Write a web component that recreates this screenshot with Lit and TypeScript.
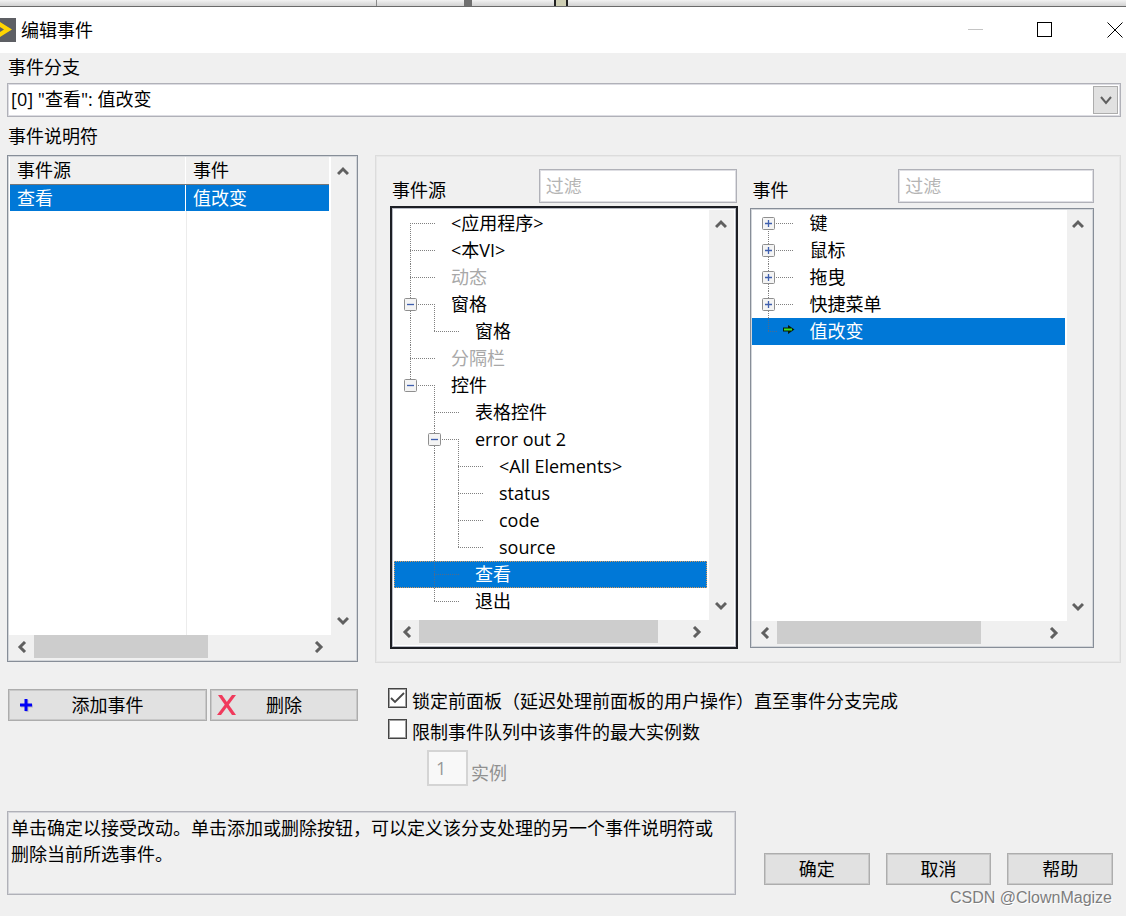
import { LitElement, html, svg, css, nothing } from "lit";
import { customElement, property } from "lit/decorators.js";

type Span = "full" | "top" | "bottom";

interface TreeRow {
  label: string;
  depth: number;
  lines: [number, Span][];
  toggle?: "open" | "closed";
  dim?: boolean;
  selected?: boolean;
  arrow?: boolean;
}

const SOURCES: TreeRow[] = [
  { label: "<应用程序>", depth: 0, lines: [[0, "bottom"]] },
  { label: "<本VI>", depth: 0, lines: [[0, "full"]] },
  { label: "动态", depth: 0, lines: [[0, "full"]], dim: true },
  { label: "窗格", depth: 0, lines: [[0, "full"], [1, "bottom"]], toggle: "open" },
  { label: "窗格", depth: 1, lines: [[0, "full"], [1, "top"]] },
  { label: "分隔栏", depth: 0, lines: [[0, "full"]], dim: true },
  { label: "控件", depth: 0, lines: [[0, "top"], [1, "bottom"]], toggle: "open" },
  { label: "表格控件", depth: 1, lines: [[1, "full"]] },
  { label: "error out 2", depth: 1, lines: [[1, "full"], [2, "bottom"]], toggle: "open" },
  { label: "<All Elements>", depth: 2, lines: [[1, "full"], [2, "full"]] },
  { label: "status", depth: 2, lines: [[1, "full"], [2, "full"]] },
  { label: "code", depth: 2, lines: [[1, "full"], [2, "full"]] },
  { label: "source", depth: 2, lines: [[1, "full"], [2, "top"]] },
  { label: "查看", depth: 1, lines: [[1, "full"]], selected: true },
  { label: "退出", depth: 1, lines: [[1, "top"]] },
];

const EVENTS: TreeRow[] = [
  { label: "键", depth: 0, lines: [[0, "bottom"]], toggle: "closed" },
  { label: "鼠标", depth: 0, lines: [[0, "full"]], toggle: "closed" },
  { label: "拖曳", depth: 0, lines: [[0, "full"]], toggle: "closed" },
  { label: "快捷菜单", depth: 0, lines: [[0, "full"]], toggle: "closed" },
  { label: "值改变", depth: 0, lines: [[0, "top"]], selected: true, arrow: true },
];

const STEP = 24;

const shared = css`
  * {
    box-sizing: border-box;
  }
  button {
    font: inherit;
    color: inherit;
    margin: 0;
    padding: 0;
    border: 0;
    background: none;
  }
  svg {
    display: block;
  }
`;

@customElement("scroll-frame")
export class ScrollFrame extends LitElement {
  @property({ type: Number }) size = 50;

  static styles = [
    shared,
    css`
      :host {
        display: grid;
        grid-template-columns: minmax(0, 1fr) 25px;
        grid-template-rows: minmax(0, 1fr) 25px;
        background: #fff;
        min-width: 0;
      }
      .view {
        min-width: 0;
        overflow: hidden;
      }
      .bar {
        display: flex;
        justify-content: space-between;
        background: #f0f0f0;
      }
      .vertical {
        flex-direction: column;
      }
      .bar button {
        flex: none;
        width: 25px;
        height: 23px;
        display: grid;
        place-items: center;
      }
      .vertical button {
        width: 23px;
        height: 28px;
      }
      .track {
        flex: 1;
      }
      .thumb {
        height: 23px;
        background: #cdcdcd;
      }
      .corner {
        background: #f0f0f0;
      }
      path {
        fill: none;
        stroke: #606060;
        stroke-width: 3;
      }
    `,
  ];

  private arrow(name: string, d: string) {
    return html`<button type="button" aria-label=${name}>
      <svg width="12" height="12" viewBox="0 0 12 12"><path d=${d} /></svg>
    </button>`;
  }

  render() {
    return html`
      <div class="view"><slot></slot></div>
      <div class="bar vertical">
        ${this.arrow("向上滚动", "M1 9 L6 4 L11 9")}
        ${this.arrow("向下滚动", "M1 3 L6 8 L11 3")}
      </div>
      <div class="bar">
        ${this.arrow("向左滚动", "M9 1 L4 6 L9 11")}
        <div class="track"><div class="thumb" style="width:${this.size}%"></div></div>
        ${this.arrow("向右滚动", "M3 1 L8 6 L3 11")}
      </div>
      <div class="corner"></div>
    `;
  }
}

@customElement("event-tree")
export class EventTree extends LitElement {
  @property({ attribute: false }) rows: TreeRow[] = [];
  @property() name = "";
  @property({ type: Boolean }) focused = false;

  static styles = [
    shared,
    css`
      :host {
        display: block;
      }
      ul {
        list-style: none;
        margin: 0;
        padding: 0;
      }
      .row {
        position: relative;
        display: flex;
        height: 27px;
        line-height: 27px;
        margin-right: 2px;
        white-space: nowrap;
      }
      .guides {
        flex: none;
        stroke: #808080;
        stroke-dasharray: 1 1;
      }
      .dim {
        color: #a8a8a8;
      }
      .selected {
        color: #fff;
        background: #0078d7;
      }
      .selected .guides {
        stroke: #4a6c90;
      }
      .focused .selected {
        outline: 1px dotted #d99a5b;
        outline-offset: -1px;
      }
      .toggle {
        position: absolute;
        top: 7px;
        width: 13px;
        height: 13px;
      }
    `,
  ];

  private guides(r: TreeRow) {
    const x = 16 + r.depth * STEP;
    const width = 57 + r.depth * STEP;
    return html`<svg class="guides" width=${width} height="27" aria-hidden="true">
      ${r.lines.map(([col, span]) => {
        const cx = 16.5 + col * STEP;
        return svg`<line x1=${cx} x2=${cx} y1=${span === "bottom" ? 13 : 0} y2=${span === "top" ? 14 : 27} />`;
      })}
      <line x1=${x} x2=${x + (r.arrow ? 10 : 25)} y1="13.5" y2="13.5" />
      ${r.arrow
        ? svg`<path d="M31 9.5 H36 V7 L42.5 11.5 L36 16 V13.5 H31 Z" fill="#0b1a0b" stroke="none" />
            <path d="M32 11.5 H40" stroke="#3fe01f" stroke-width="2" stroke-dasharray="none" />`
        : nothing}
    </svg>`;
  }

  private toggle(r: TreeRow) {
    return html`<button
      class="toggle"
      type="button"
      aria-label=${(r.toggle === "open" ? "折叠" : "展开") + r.label}
      style="left:${10 + r.depth * STEP}px"
    >
      <svg width="13" height="13" viewBox="0 0 13 13">
        <rect x="0.5" y="0.5" width="12" height="12" rx="1" fill="#f4f4f4" stroke="#8f8f8f" />
        <path d=${r.toggle === "open" ? "M3 6.5H10" : "M3 6.5H10M6.5 3V10"} stroke="#3f5fae" stroke-width="1.3" />
      </svg>
    </button>`;
  }

  render() {
    return html`<ul role="tree" aria-label=${this.name} class=${this.focused ? "focused" : ""}>
      ${this.rows.map(
        (r) => html`<li
          role="treeitem"
          aria-level=${r.depth + 1}
          aria-selected=${r.selected ? "true" : "false"}
          class="row ${r.dim ? "dim" : ""} ${r.selected ? "selected" : ""}"
        >
          ${this.guides(r)}${r.toggle ? this.toggle(r) : nothing}<span>${r.label}</span>
        </li>`
      )}
    </ul>`;
  }
}

@customElement("app-root")
export class AppRoot extends LitElement {
  static styles = [
    shared,
    css`
      :host {
        position: relative;
        display: flex;
        flex-direction: column;
        min-height: 100vh;
        overflow: hidden;
        background: #f0f0f0;
        color: #000;
        font: 18px/26px "Open Sans", "Noto Sans CJK SC", sans-serif;
      }
      .behind {
        display: flex;
        height: 7px;
        padding-left: 376px;
        background: linear-gradient(#f2f2f2, #d2d2d2);
        border-bottom: 1px solid #6a6a6a;
      }
      .edge {
        width: 1px;
        background: #8a8a8a;
      }
      .post {
        width: 8px;
        margin-left: 87px;
        background: #707070;
      }
      .block {
        width: 14px;
        margin-left: 82px;
        background: #cfcfb4;
        border: solid #222;
        border-width: 0 2px;
      }
      .titlebar {
        display: flex;
        align-items: center;
        height: 46px;
        padding-right: 3px;
        background: #fff;
      }
      h1 {
        flex: 1;
        margin: 0 0 0 5px;
        font: inherit;
      }
      .controls {
        display: flex;
        gap: 54px;
      }
      .content {
        padding: 1px 5px 0 7px;
      }
      .caption {
        display: block;
        padding-left: 1px;
        height: 29px;
      }
      .combo {
        display: grid;
        grid-template-columns: minmax(0, 1fr) 27px;
        align-items: center;
        height: 34px;
        border: 1px solid #b0b1b8;
        box-shadow: inset 0 0 0 1px #dcdce2;
        background: #fff;
        margin-bottom: 6px;
      }
      .combo select {
        grid-area: 1 / 1 / 2 / 3;
        height: 32px;
        padding: 0 30px 2px 3px;
        border: 0;
        background: none;
        appearance: none;
        font: inherit;
        color: inherit;
      }
      .drop {
        grid-area: 1 / 2;
        display: grid;
        place-items: center;
        width: 25px;
        height: 28px;
        border: 1px solid #adadad;
        background: #e1e1e1;
        pointer-events: none;
      }
      .main {
        display: grid;
        grid-template-columns: minmax(0, 351fr) minmax(0, 746fr);
        column-gap: 17px;
        margin-top: 3px;
      }
      .box {
        padding: 1px;
        border: 1px solid #878e98;
        box-shadow: inset 0 0 0 1px #d3d6da;
        background: #fff;
      }
      .specs {
        display: grid;
        margin-bottom: 1px;
      }
      .sheet {
        display: flex;
        flex-direction: column;
        height: 100%;
        padding: 0 2px 0 1px;
        background: linear-gradient(#ececec, #ececec) 55% 0 / 1px 100% no-repeat;
      }
      table {
        width: 100%;
        border-collapse: collapse;
        table-layout: fixed;
      }
      th,
      td {
        height: 27px;
        padding: 0 0 0 7px;
        font-weight: 400;
        line-height: 26px;
        text-align: left;
      }
      th {
        background: #f0f0f0;
        border-bottom: 1px solid #777;
      }
      th + th,
      td + td {
        border-left: 1px solid #fff;
      }
      th:first-child {
        width: 55%;
      }
      td {
        background: #0078d7;
        color: #fff;
      }
      .group {
        display: grid;
        grid-template-columns: minmax(0, 349fr) minmax(0, 344fr);
        column-gap: 12px;
        padding: 13px 26px 13px 14px;
        border: 1px solid #dcdcdc;
        box-shadow: inset 0 0 0 1px #e8e8e8;
      }
      .pane {
        display: flex;
        flex-direction: column;
      }
      .head {
        display: flex;
        align-items: center;
        justify-content: space-between;
        height: 34px;
      }
      .head label {
        padding: 8px 0 0 2px;
      }
      .filter {
        width: 57%;
        height: 34px;
        padding: 0 6px;
        border: 1px solid #b0b1b8;
        box-shadow: inset 0 0 0 1px #dedee3;
        border-radius: 0;
        background: #fff;
        font: inherit;
      }
      .filter::placeholder {
        color: #b4b4b4;
        opacity: 1;
      }
      .source .filter {
        margin-right: 1px;
      }
      .pane .box {
        display: grid;
        flex: 1;
      }
      .source .box {
        margin-top: 3px;
        padding: 2px;
        border: 2px solid #1c1e24;
        box-shadow: inset 0 0 0 1px #b8bbc4;
      }
      .event .box {
        margin: 5px 0 1px;
      }
      event-tree {
        min-height: 410px;
      }
      .options {
        display: grid;
        grid-template-columns: minmax(0, 349fr) minmax(0, 731fr);
        column-gap: 30px;
        margin-top: 22px;
        padding-left: 1px;
      }
      .edit {
        display: grid;
        grid-template-columns: 199fr 148fr;
        gap: 3px;
        align-items: start;
        padding-top: 4px;
      }
      .push {
        height: 32px;
        border: 1px solid #adadad;
        box-shadow: inset 0 0 0 1px #c8c8c8;
        background: #e1e1e1;
      }
      .tool {
        display: grid;
        grid-template-columns: 36px 1fr 36px;
        align-items: center;
      }
      .check {
        display: flex;
        align-items: center;
        gap: 5px;
        height: 31px;
        white-space: nowrap;
      }
      .check input {
        flex: none;
        width: 19px;
        height: 20px;
        margin: 0 0 6px;
        appearance: none;
        border: 1px solid #444;
        box-shadow: inset 0 0 0 1px #a0a0a0;
        background: #fff;
      }
      .check input:checked {
        background: #fff
          url("data:image/svg+xml,%3Csvg xmlns='http://www.w3.org/2000/svg' viewBox='0 0 17 18'%3E%3Cpath d='M2 9l4 4L15 4' fill='none' stroke='%23484848' stroke-width='1.8'/%3E%3C/svg%3E");
      }
      .count {
        display: flex;
        align-items: flex-end;
        gap: 3px;
        margin-top: 3px;
        padding-left: 39px;
        color: #909090;
      }
      .count input {
        width: 41px;
        height: 36px;
        padding: 0 7px;
        border: 2px solid #d4d4d4;
        background: #f8f8f8;
        color: #989898;
        font: inherit;
      }
      .footer {
        display: grid;
        grid-template-columns: minmax(0, 729fr) minmax(0, 349fr);
        column-gap: 28px;
        align-items: end;
        margin: 25px 8px 0 0;
      }
      .help {
        align-self: start;
        height: 84px;
        margin: 0;
        padding: 3px 16px 3px 3px;
        border: 1px solid #b0b1b8;
        box-shadow: inset 0 0 0 1px #d4d5da;
      }
      .actions {
        display: grid;
        grid-template-columns: repeat(3, 1fr);
        gap: 16px;
        padding-bottom: 10px;
      }
      .mark {
        position: absolute;
        right: 14px;
        bottom: 6px;
        color: #7d7d7d;
        font: 16px/24px "Liberation Sans", sans-serif;
        text-shadow: 1px 1px 0 #fff;
      }
    `,
  ];

  render() {
    return html`
      <div class="behind">
        <div class="edge"></div>
        <div class="post"></div>
        <div class="block"></div>
      </div>
      <header class="titlebar">
        <svg width="16" height="24" viewBox="0 0 16 24" aria-hidden="true">
          <rect width="16" height="24" fill="#5d5f64" />
          <path d="M0 4 L12 11.5 L0 19 V14 L4 11.5 L0 9 Z" fill="#ffd500" />
        </svg>
        <h1>编辑事件</h1>
        <div class="controls">
          <button type="button" aria-label="最小化">
            <svg width="16" height="16"><path d="M1 7.5H16" stroke="#c4c4c4" /></svg>
          </button>
          <button type="button" aria-label="最大化">
            <svg width="16" height="16"><rect x="0.5" y="0.5" width="14" height="14" fill="none" stroke="#000" /></svg>
          </button>
          <button type="button" aria-label="关闭">
            <svg width="16" height="16"><path d="M0.5 0.5L15.5 15.5M15.5 0.5L0.5 15.5" stroke="#000" /></svg>
          </button>
        </div>
      </header>
      <div class="content">
        <label class="caption" for="branch">事件分支</label>
        <div class="combo">
          <select id="branch">
            <option>[0] "查看": 值改变</option>
          </select>
          <span class="drop">
            <svg width="12" height="12" viewBox="0 0 12 12"><path d="M1 3L6 9L11 3" fill="none" stroke="#606060" stroke-width="2" /></svg>
          </span>
        </div>
        <span class="caption" id="specs">事件说明符</span>
        <main class="main">
          <section class="box specs" aria-labelledby="specs">
            <scroll-frame .size=${64}>
              <div class="sheet">
                <table>
                  <thead>
                    <tr>
                      <th>事件源</th>
                      <th>事件</th>
                    </tr>
                  </thead>
                  <tbody>
                    <tr>
                      <td>查看</td>
                      <td>值改变</td>
                    </tr>
                  </tbody>
                </table>
              </div>
            </scroll-frame>
          </section>
          <section class="group">
            <div class="pane source">
              <div class="head">
                <label for="source-filter">事件源</label>
                <input class="filter" id="source-filter" type="text" placeholder="过滤" />
              </div>
              <div class="box">
                <scroll-frame .size=${90}>
                  <event-tree name="事件源" focused .rows=${SOURCES}></event-tree>
                </scroll-frame>
              </div>
            </div>
            <div class="pane event">
              <div class="head">
                <label for="event-filter">事件</label>
                <input class="filter" id="event-filter" type="text" placeholder="过滤" />
              </div>
              <div class="box">
                <scroll-frame .size=${77}>
                  <event-tree name="事件" .rows=${EVENTS}></event-tree>
                </scroll-frame>
              </div>
            </div>
          </section>
        </main>
        <section class="options">
          <div class="edit">
            <button class="push tool" type="button">
              <svg width="36" height="20" viewBox="0 0 36 20" aria-hidden="true">
                <path d="M12 11H24M18 5V17" stroke="#b8b8c8" stroke-width="3" />
                <path d="M11 10H23M17 4V16" stroke="#0000f5" stroke-width="3" />
              </svg>
              <span>添加事件</span>
            </button>
            <button class="push tool" type="button">
              <svg width="36" height="24" viewBox="0 0 36 24" aria-hidden="true">
                <path d="M7 2H11L25 22H21Z" fill="#f03a5c" />
                <path d="M21 2H25L10 22H6Z" fill="#f03a5c" />
              </svg>
              <span>删除</span>
            </button>
          </div>
          <div>
            <label class="check"><input type="checkbox" checked /><span>锁定前面板（延迟处理前面板的用户操作）直至事件分支完成</span></label>
            <label class="check"><input type="checkbox" /><span>限制事件队列中该事件的最大实例数</span></label>
            <div class="count">
              <input id="count" type="text" value="1" disabled />
              <label for="count">实例</label>
            </div>
          </div>
        </section>
        <footer class="footer">
          <p class="help">单击确定以接受改动。单击添加或删除按钮，可以定义该分支处理的另一个事件说明符或删除当前所选事件。</p>
          <div class="actions">
            <button class="push" type="button">确定</button>
            <button class="push" type="button">取消</button>
            <button class="push" type="button">帮助</button>
          </div>
        </footer>
      </div>
      <div class="mark">CSDN @ClownMagize</div>
    `;
  }
}
